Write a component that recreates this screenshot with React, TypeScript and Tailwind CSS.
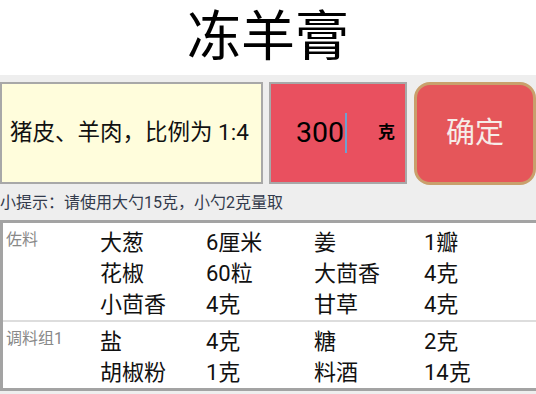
const font = { fontFamily: "Roboto, 'Noto Sans CJK SC', sans-serif" };

type Item = { name: string; qty: string };

const groups: { label: string; items: Item[] }[] = [
  {
    label: "佐料",
    items: [
      { name: "大葱", qty: "6厘米" },
      { name: "姜", qty: "1瓣" },
      { name: "花椒", qty: "60粒" },
      { name: "大茴香", qty: "4克" },
      { name: "小茴香", qty: "4克" },
      { name: "甘草", qty: "4克" },
    ],
  },
  {
    label: "调料组1",
    items: [
      { name: "盐", qty: "4克" },
      { name: "糖", qty: "2克" },
      { name: "胡椒粉", qty: "1克" },
      { name: "料酒", qty: "14克" },
    ],
  },
];

export default function App() {
  return (
    <div
      className="w-[536px] h-[394px] overflow-hidden bg-[#eeeeee]"
      style={font}
    >
      {/* title */}
      <div className="h-[75px] bg-white flex items-center justify-center">
        <span className="text-[54px] leading-none text-black">冻羊膏</span>
      </div>

      {/* inputs */}
      <div className="flex pt-[7px] h-[110px]">
        <div className="w-[263px] h-[102px] border-2 border-[#a8a8a8] bg-[#fffddc] flex items-center pl-[8px]">
          <span className="text-[22.5px] text-[#111]">猪皮、羊肉，比例为 1:4</span>
        </div>
        <div className="ml-[6px] w-[138px] h-[102px] border-2 border-[#a8a8a8] bg-[#e9505f] flex items-center">
          <div className="flex items-center pl-[25px]">
            <span className="text-[28.5px] text-black leading-none">300</span>
            <span className="ml-[1px] w-[2px] h-[40px] bg-[#6fa0d0]" />
          </div>
          <span className="ml-auto mr-[10px] text-[17px] font-bold text-black">克</span>
        </div>
        <button className="ml-[7px] w-[122px] h-[103px] rounded-[16px] border-[3px] border-[#c9a06c] bg-[#e5565a] flex items-center justify-center">
          <span className="text-[29px] text-[#f6ece8]">确定</span>
        </button>
      </div>

      {/* hint */}
      <div className="h-[35px] flex items-center">
        <span className="text-[16px] text-[#333b4c]">小提示：请使用大勺15克，小勺2克量取</span>
      </div>

      {/* table */}
      <div className="w-[540px] border-[3px] border-[#a3a3a3] bg-white">
        {groups.map((g, gi) => (
          <div
            key={g.label}
            className={`flex pt-[4px] ${gi > 0 ? "border-t-2 border-[#dddddd]" : ""}`}
          >
            <div className="w-[97px] shrink-0 pl-[3px] pt-[1px] text-[16px] leading-[24px] text-[#888888]">
              {g.label}
            </div>
            <div className="grid grid-cols-[106px_108px_110px_110px] text-[22px] text-[#111]">
              {g.items.map((it) => (
                <div key={it.name} className="contents">
                  <div className="h-[31px] leading-[31px]">{it.name}</div>
                  <div className="h-[31px] leading-[31px]">{it.qty}</div>
                </div>
              ))}
            </div>
          </div>
        ))}
      </div>
    </div>
  );
}
